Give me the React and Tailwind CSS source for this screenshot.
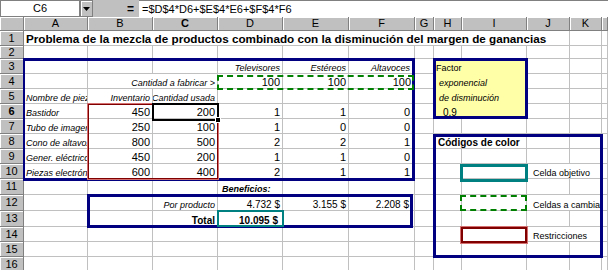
import React from 'react'
import clsx from 'clsx'

const cols = ['A', 'B', 'C', 'D', 'E', 'F', 'G', 'H', 'I', 'J', 'K', 'L']
const widths = {
  A: 'w-[64px]', B: 'w-[65px]', C: 'w-[65px]', D: 'w-[65px]', E: 'w-[66px]', F: 'w-[66px]',
  G: 'w-[19px]', H: 'w-[28px]', I: 'w-[65px]', J: 'w-[43px]', K: 'w-[32px]', L: 'w-[6px]',
}

const lbl = 'italic text-[9px]'
const lblR = 'italic text-[9px] justify-end'
const num = 'justify-end text-[11px]'
const cur = 'justify-end text-[10px]'
const yellow = 'w-[93px] bg-[#ffffa8]'

const rows = [
  {
    n: 1, h: 'h-[15px]',
    cells: {
      A: { span: 10, w: 'w-[546px]', t: 'Problema de la mezcla de productos combinado con la disminución del margen de ganancias', c: 'font-bold text-[11.7px]' },
    },
  },
  { n: 2, h: 'h-[13px]' },
  {
    n: 3, h: 'h-[15px]',
    cells: {
      D: { t: 'Televisores', c: lblR },
      E: { t: 'Estéreos', c: lblR },
      F: { t: 'Altavoces', c: lblR, pr: 'pr-[4px]' },
      H: { span: 2, w: yellow, bare: true, t: 'Factor', c: 'text-[9px]' },
    },
  },
  {
    n: 4, h: 'h-[15px]',
    cells: {
      B: { span: 2, w: 'w-[130px]', t: 'Cantidad a fabricar >', c: lblR },
      D: { t: '100', c: num },
      E: { t: '100', c: num },
      F: { t: '100', c: num, pr: 'pr-[3px]' },
      H: { span: 2, w: yellow, bare: true, t: 'exponencial', c: lbl, pl: 'pl-[5px]' },
    },
  },
  {
    n: 5, h: 'h-[15px]',
    cells: {
      A: { t: 'Nombre de piezas', c: lbl },
      B: { t: 'Inventario', c: lblR },
      C: { t: 'Cantidad usada', c: lblR },
      H: { span: 2, w: yellow, bare: true, t: 'de disminución', c: lbl, pl: 'pl-[5px]' },
    },
  },
  {
    n: 6, h: 'h-[15px]', sel: true,
    cells: {
      A: { t: 'Bastidor', c: lbl },
      B: { t: '450', c: num },
      C: { t: '200', c: num },
      D: { t: '1', c: num },
      E: { t: '1', c: num },
      F: { t: '0', c: num, pr: 'pr-[4px]' },
      H: { span: 2, w: yellow, bare: true, t: '0,9', c: 'text-[10px]', pl: 'pl-[9px]' },
    },
  },
  {
    n: 7, h: 'h-[15px]',
    cells: {
      A: { t: 'Tubo de imagen', c: lbl },
      B: { t: '250', c: num },
      C: { t: '100', c: num },
      D: { t: '1', c: num },
      E: { t: '0', c: num },
      F: { t: '0', c: num, pr: 'pr-[4px]' },
    },
  },
  {
    n: 8, h: 'h-[15px]',
    cells: {
      A: { t: 'Cono de altavoz', c: lbl },
      B: { t: '800', c: num },
      C: { t: '500', c: num },
      D: { t: '2', c: num },
      E: { t: '2', c: num },
      F: { t: '1', c: num, pr: 'pr-[4px]' },
      H: { span: 2, w: 'w-[93px]', t: 'Códigos de color', c: 'font-bold text-[10px]', pl: 'pl-[4px]' },
    },
  },
  {
    n: 9, h: 'h-[15px]',
    cells: {
      A: { t: 'Gener. eléctrico', c: lbl },
      B: { t: '450', c: num },
      C: { t: '200', c: num },
      D: { t: '1', c: num },
      E: { t: '1', c: num },
      F: { t: '0', c: num, pr: 'pr-[4px]' },
    },
  },
  {
    n: 10, h: 'h-[15px]',
    cells: {
      A: { t: 'Piezas electrónicas', c: lbl },
      B: { t: '600', c: num },
      C: { t: '400', c: num },
      D: { t: '2', c: num },
      E: { t: '1', c: num },
      F: { t: '1', c: num, pr: 'pr-[4px]' },
      J: { span: 2, w: 'w-[75px]', t: 'Celda objetivo', c: 'text-[9px]', pl: 'pl-[6px]' },
    },
  },
  {
    n: 11, h: 'h-[16px]',
    cells: {
      D: { t: 'Beneficios:', c: 'font-bold italic text-[9px]', pl: 'pl-[4px]' },
    },
  },
  {
    n: 12, h: 'h-[16px]',
    cells: {
      C: { t: 'Por producto', c: lblR },
      D: { t: '4.732 $', c: cur },
      E: { t: '3.155 $', c: cur },
      F: { t: '2.208 $', c: cur, pr: 'pr-[5px]' },
      J: { span: 2, w: 'w-[75px]', t: 'Celdas a cambiar', c: 'text-[9px]', pl: 'pl-[6px]' },
    },
  },
  {
    n: 13, h: 'h-[16px]',
    cells: {
      C: { t: 'Total', c: 'justify-end font-bold text-[10px]' },
      D: { t: '10.095 $', c: 'justify-end font-bold text-[10px]', pr: 'pr-[4px]' },
    },
  },
  {
    n: 14, h: 'h-[15px]',
    cells: {
      J: { span: 2, w: 'w-[75px]', t: 'Restricciones', c: 'text-[9px]', pl: 'pl-[6px]' },
    },
  },
  { n: 15, h: 'h-[15px]' },
  { n: 16, h: 'h-[15px]' },
]

function Cell({ w, t, c, pl, pr, bare }) {
  return (
    <div
      className={clsx(
        'flex h-full shrink-0 items-end overflow-hidden whitespace-nowrap border-b border-r leading-none',
        bare ? 'border-transparent' : 'border-[#c0c0c0]',
        pl || 'pl-[2px]',
        pr || 'pr-[2px]',
        w,
        c,
      )}
    >
      {t}
    </div>
  )
}

function HeadCell({ w, children, bold }) {
  return (
    <div
      className={clsx(
        'flex h-full shrink-0 items-center justify-center border-b border-r border-[#808080] bg-[#c0c0c0] text-[11px] leading-none shadow-[inset_1px_1px_0_#ffffff]',
        w,
        bold && 'font-bold',
      )}
    >
      {children}
    </div>
  )
}

function Row({ n, h, cells = {}, sel }) {
  const out = []
  for (let i = 0; i < cols.length; i++) {
    const k = cols[i]
    const c = cells[k]
    if (c) {
      out.push(<Cell key={k} {...c} w={c.w || widths[k]} />)
      i += (c.span || 1) - 1
    } else {
      out.push(<Cell key={k} w={widths[k]} />)
    }
  }
  return (
    <div className={clsx('flex', h)}>
      <HeadCell w="w-[24px]" bold={sel}>{n}</HeadCell>
      {out}
    </div>
  )
}

const frame = 'pointer-events-none'

export default function App() {
  return (
    <div className="h-[270px] w-[608px] overflow-hidden bg-white font-['Liberation_Sans',Arial,sans-serif] text-black">
      {/* formula bar */}
      <div className="flex h-[17px] bg-[#c0c0c0]">
        <div className="flex w-[80px] items-center justify-center border border-[#808080] bg-white text-[11px]">C6</div>
        <div className="flex w-[13px] items-center justify-center border border-[#808080] shadow-[inset_1px_1px_0_#ffffff]">
          <svg width="7" height="4" viewBox="0 0 7 4">
            <path d="M0 0h7L3.5 4z" fill="#000" />
          </svg>
        </div>
        <div className="flex w-[46px] items-center justify-end pr-[5px] text-[12px] font-bold">=</div>
        <div className="flex flex-1 items-center border-t border-[#808080] bg-white pl-[3px] text-[11px]">
          =$D$4*D6+$E$4*E6+$F$4*F6
        </div>
      </div>

      {/* column headers */}
      <div className="flex h-[14px]">
        <HeadCell w="w-[24px]" />
        {cols.map((k) => (
          <HeadCell key={k} w={widths[k]} bold={k === 'C'}>
            {k === 'L' ? '' : k}
          </HeadCell>
        ))}
      </div>

      {/* sheet body: cells in flow, range borders on a grid layered over them */}
      <div className="relative">
        {rows.map((r) => (
          <Row key={r.n} {...r} />
        ))}

        <div className="pointer-events-none absolute inset-0 grid grid-cols-[24px_64px_65px_65px_65px_66px_66px_19px_28px_65px_43px_32px_6px] grid-rows-[15px_13px_15px_15px_15px_15px_15px_15px_15px_15px_16px_16px_16px_15px_15px_15px]">
          {/* navy range boxes */}
          <div className={clsx(frame, 'col-start-2 col-end-8 row-start-3 row-end-11 -mb-[2px] -ml-px -mt-px border-[3px] border-l-2 border-[#000080]')} />
          <div className={clsx(frame, 'col-start-9 col-end-11 row-start-3 row-end-7 -ml-px -mr-px -mt-px border-[3px] border-[#000080]')} />
          <div className={clsx(frame, 'col-start-9 col-end-13 row-start-8 row-end-16 -mb-px -ml-px -mr-px border-[3px] border-[#000080]')} />
          <div className={clsx(frame, 'col-start-3 col-end-8 row-start-12 row-end-14 -mb-px -ml-px -mt-px mr-[2px] border-[3px] border-[#000080]')} />

          {/* restricciones */}
          <div className={clsx(frame, 'col-start-3 col-end-5 row-start-6 row-end-11 border border-[#800000] shadow-[0_0_0_1px_#d47070]')} />
          {/* celdas a cambiar */}
          <div className={clsx(frame, 'col-start-5 col-end-8 row-start-4 row-end-5 -mb-px -ml-px mr-px mt-px border-2 border-dashed border-[#008000]')} />
          {/* celda objetivo */}
          <div className={clsx(frame, 'col-start-5 col-end-6 row-start-13 row-end-14 -ml-px -mr-px -mt-px border-2 border-[#008080]')} />

          {/* active cell C6 */}
          <div className={clsx(frame, 'relative col-start-4 col-end-5 row-start-6 row-end-7 -mb-[2px] -ml-px -mr-px -mt-px border-2 border-black')}>
            <div className="absolute -bottom-[4px] -right-[4px] h-[6px] w-[6px] border border-white bg-black" />
          </div>

          {/* legend swatches */}
          <div className={clsx(frame, 'col-start-10 col-end-11 row-start-10 row-end-11 -mb-[3px] -ml-[2px] -mr-px border-[3px] border-[#008080]')} />
          <div className={clsx(frame, 'col-start-10 col-end-11 row-start-12 row-end-13 -ml-[2px] border-2 border-dashed border-[#008000]')} />
          <div className={clsx(frame, 'col-start-10 col-end-11 row-start-14 row-end-15 -mb-px -ml-px border-2 border-[#800000] shadow-[0_0_0_1px_#d47070]')} />
        </div>
      </div>
    </div>
  )
}
